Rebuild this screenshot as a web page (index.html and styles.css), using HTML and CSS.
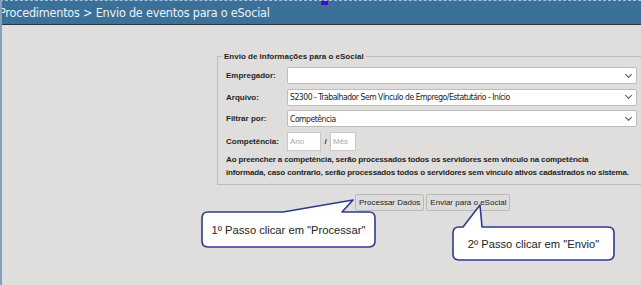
FILE: index.html
```html
<!DOCTYPE html>
<html lang="pt-BR">
<head>
    <meta charset="UTF-8">
    <title>Envio de eventos para o eSocial</title>
    <link rel="stylesheet" href="styles.css">
</head>
<body>
    <div class="header">
        <span class="crumb">Procedimentos &gt; Envio de eventos para o eSocial</span>
        <span class="marker"></span>
    </div>

    <div class="page">
        <div class="form-area">
            <fieldset class="box">
                <legend>Envio de informações para o eSocial</legend>

                <div class="row">
                    <label>Empregador:</label>
                    <div class="select"><span></span><i class="chev"></i></div>
                </div>
                <div class="row">
                    <label>Arquivo:</label>
                    <div class="select"><span>S2300 - Trabalhador Sem Vínculo de Emprego/Estatutário - Início</span><i class="chev"></i></div>
                </div>
                <div class="row">
                    <label>Filtrar por:</label>
                    <div class="select"><span>Competência</span><i class="chev"></i></div>
                </div>
                <div class="row row-comp">
                    <label>Competência:</label>
                    <div class="comp">
                        <div class="field f-ano">Ano</div>
                        <span class="slash">/</span>
                        <div class="field f-mes">Mês</div>
                    </div>
                </div>
                <p class="note">Ao preencher a competência, serão processados todos os servidores sem vinculo na competência<br>informada, caso contrario, serão processados todos o servidores sem vinculo ativos cadastrados no sistema.</p>
            </fieldset>

            <div class="actions">
                <button>Processar Dados</button>
                <button>Enviar para o eSocial</button>
            </div>
        </div>
    </div>

    <!-- balões de ajuda -->
    <div class="callout c1">
        <svg width="173" height="35" viewBox="0 0 173 35">
            <path d="M6,0 H81 L151,-12 L140,0 H167 Q173,0 173,6 V29 Q173,35 167,35 H6 Q0,35 0,29 V6 Q0,0 6,0 Z"/>
        </svg>
        <span>1º Passo clicar em "Processar"</span>
    </div>
    <div class="callout c2">
        <svg width="161" height="33" viewBox="0 0 161 33">
            <path d="M6,0 H10 L27,-22 L29,0 H155 Q161,0 161,6 V27 Q161,33 155,33 H6 Q0,33 0,27 V6 Q0,0 6,0 Z"/>
        </svg>
        <span>2º Passo clicar em "Envio"</span>
    </div>
</body>
</html>
```

FILE: styles.css
```css
* {
    box-sizing: border-box;
}

body {
    margin: 0;
    height: 285px;
    overflow: hidden;
    background: #dfdedc;
    font-family: "Liberation Sans", Arial, sans-serif;
    border-left: 2px solid #86a0b8;
}

.header {
    height: 25px;
    margin-left: -2px;
    background: #3b7198;
    border-top: 1px dashed #a9c1d6;
    border-bottom: 1px solid #22384b;
    display: flex;
    align-items: center;
}

.crumb {
    font-family: "DejaVu Sans Condensed", "DejaVu Sans", sans-serif;
    font-stretch: condensed;
    font-size: 12.5px;
    color: #eef3f7;
    margin-left: -1px;
    letter-spacing: -0.2px;
}

.marker {
    position: absolute;
    left: 321px;
    top: 1px;
    width: 7px;
    height: 4px;
    background: #5200e0;
}

.page {
    padding: 27px 0 0 215px;
}

.form-area {
    width: 436px;
}

.box {
    margin: 0;
    border: 1px solid #bdbcba;
    border-right: none;
    padding: 4px 0 5px 8px;
}

.box legend {
    padding: 0 2px;
    margin-left: -4px;
    font-size: 8px;
    font-weight: bold;
    color: #1e1e1e;
}

.row {
    display: flex;
    align-items: center;
    height: 21.5px;
}

.row label {
    width: 61px;
    font-size: 8px;
    font-weight: bold;
    color: #1e1e1e;
}

.select {
    width: 350px;
    height: 17px;
    background: #fff;
    border: 1px solid #bcbcbc;
    border-radius: 2px;
    display: flex;
    align-items: center;
    justify-content: space-between;
    padding: 0 5px 0 2px;
    font-family: "DejaVu Sans Condensed", "DejaVu Sans", sans-serif;
    font-stretch: condensed;
    font-size: 8.5px;
    color: #222;
    letter-spacing: -0.45px;
}

.chev {
    width: 5px;
    height: 5px;
    border-right: 1.2px solid #555;
    border-bottom: 1.2px solid #555;
    transform: rotate(45deg);
    margin-top: -3px;
}

.row-comp {
    height: 24px;
}

.comp {
    display: flex;
    align-items: center;
}

.field {
    height: 19px;
    background: #fff;
    border: 1px solid #c8c8c8;
    font-size: 8px;
    color: #aaa;
    padding: 4px 0 0 2px;
}

.f-ano {
    width: 34px;
}

.f-mes {
    width: 26px;
}

.slash {
    font-size: 8px;
    font-weight: bold;
    color: #333;
    width: 9px;
    text-align: center;
}

.note {
    margin: -1px 0 0;
    font-size: 8px;
    font-weight: bold;
    line-height: 13px;
    color: #1e1e1e;
    white-space: nowrap;
    letter-spacing: -0.15px;
}

.actions {
    display: flex;
    gap: 2px;
    margin: 9px 0 0 138px;
}

.actions button {
    height: 17px;
    padding: 0 3px;
    background: #dcdcdc;
    border: 1px solid #b9b9b9;
    border-radius: 2px;
    font-family: "Liberation Sans", Arial, sans-serif;
    font-size: 8px;
    color: #222;
}

.callout {
    position: absolute;
    display: flex;
    align-items: center;
    justify-content: center;
}

.callout svg {
    position: absolute;
    left: 0;
    top: 0;
    overflow: visible;
}

.callout path {
    fill: #fff;
    stroke: #2e3b8c;
    stroke-width: 1.6;
    stroke-linejoin: round;
}

.callout span {
    position: relative;
    font-size: 11.2px;
    color: #222;
}

.c1 {
    left: 202px;
    top: 212px;
    width: 173px;
    height: 35px;
}

.c2 {
    left: 453px;
    top: 227px;
    width: 161px;
    height: 33px;
}
```
